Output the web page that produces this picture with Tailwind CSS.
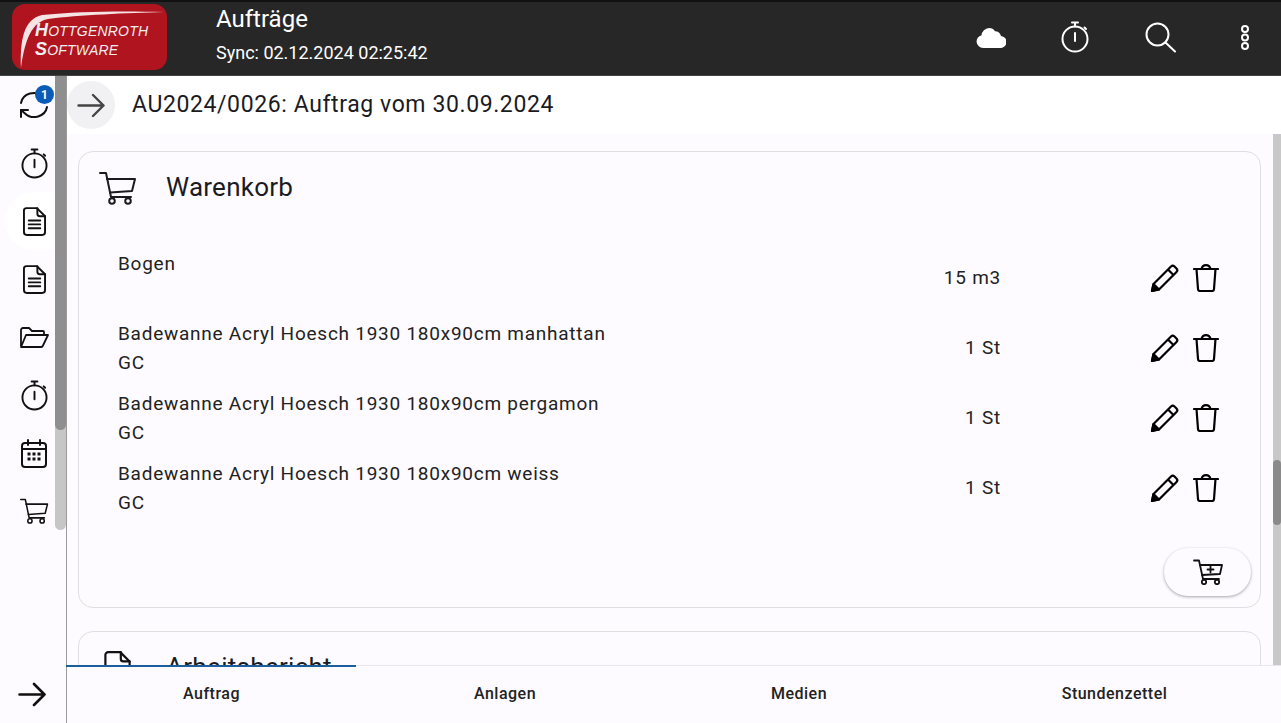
<!DOCTYPE html>
<html lang="de">
<head>
  <meta charset="UTF-8" />
  <meta name="viewport" content="width=device-width, initial-scale=1.0" />
  <title>Aufträge</title>
  <script src="https://cdn.jsdelivr.net/npm/@tailwindcss/browser@4"></script>
</head>
<body class="bg-[#fdfbff] font-['Roboto',sans-serif] text-[#1b1b1f]">
  <svg class="hidden">
    <symbol id="cart" viewBox="0 0 38 34" fill="none" stroke="currentColor" stroke-width="2" stroke-linecap="round" stroke-linejoin="round">
      <path d="M1 2h6l5 24h20" />
      <path d="M8 8h28l-3 12-22 1.500" />
      <circle cx="13" cy="30" r="2.800" />
      <circle cx="29" cy="30" r="2.800" />
    </symbol>
    <symbol id="doc" viewBox="0 0 24 30" fill="none" stroke="currentColor" stroke-width="2" stroke-linecap="round" stroke-linejoin="round">
      <path d="M3.500 1h11L23 9.500V26a3 3 0 0 1-3 3H4a3 3 0 0 1-3-3V3.500A2.500 2.500 0 0 1 3.500 1z" />
      <path d="M15 1v6a2.500 2.500 0 0 0 2.500 2.500H23" />
      <path d="M6 14h12M6 18h12M6 22h12" />
    </symbol>
    <symbol id="timer" viewBox="0 0 28 32" fill="none" stroke="currentColor" stroke-width="2" stroke-linecap="round">
      <circle cx="14" cy="18" r="12.500" />
      <path d="M14 12v8M11 1.500h6M14 1.500v4M23.500 6.500l1.500 1.500" />
    </symbol>
    <symbol id="pencil" viewBox="0 0 30 30" fill="none" stroke="currentColor" stroke-width="2.200" stroke-linejoin="round">
      <path d="M2 28l1.500-7L21 3.500a2.500 2.500 0 0 1 3.500 0l2 2a2.500 2.500 0 0 1 0 3.500L9 26.500z" />
      <path d="M18 6.500l5.500 5.500" />
      <path d="M2 28l1.500-7 5.500 5.500z" fill="currentColor" />
    </symbol>
    <symbol id="trash" viewBox="0 0 26 28" fill="none" stroke="currentColor" stroke-width="2.200" stroke-linecap="round" stroke-linejoin="round">
      <path d="M1 5h24" />
      <path d="M3.500 5l1.500 20a2 2 0 0 0 2 2h12a2 2 0 0 0 2-2l1.500-20" />
      <path d="M8.500 5C9 2.500 10.500 1.200 13 1.200S17 2.500 17.500 5" />
    </symbol>
  </svg>

  <div class="flex h-[723px] w-[1281px] flex-col overflow-hidden">
    <!-- header -->
    <header class="flex h-[76px] shrink-0 items-center border-t-2 border-b border-t-[#111] border-b-[#444] bg-[#272727] pb-[3px] text-white">
      <div class="relative ml-3 flex h-[66px] w-[155px] flex-col justify-center rounded-[13px] bg-[#b0141e] pl-[23px] pt-[6px] font-['Liberation_Sans',sans-serif] text-[14px] leading-[18px] italic text-[#eee]">
        <svg class="absolute left-[6px] top-[5px]" width="148" height="60" viewBox="0 0 148 60"><path d="M3 59C2 30 6 10 24 6 60 2 110 2 146 3 110 4 60 6 30 10 14 13 7 30 3 59z" fill="#f6e3e3" /></svg>
        <div class="relative whitespace-nowrap tracking-[0.2px]"><span class="text-[18px] font-bold">H</span>OTTGENROTH</div>
        <div class="relative whitespace-nowrap tracking-[0.2px]"><span class="text-[18px] font-bold">S</span>OFTWARE</div>
      </div>
      <div class="ml-[49px] mb-[5px]">
        <div class="text-[24px] leading-[30px]">Aufträge</div>
        <div class="mt-[7px] text-[18px] leading-[24px]">Sync: 02.12.2024 02:25:42</div>
      </div>
      <div class="ml-auto flex items-center">
        <svg width="30" height="22" viewBox="0 0 30 22" fill="#fff" class="mr-[55px]"><path d="M7 22a6.500 6.500 0 0 1-1.500-12.800A8 8 0 0 1 13 2a7 7 0 0 1 6 3.200A6.500 6.500 0 0 1 25 10a6 6 0 0 1-1 12z" /></svg>
        <svg width="28" height="32" class="mr-[56px] text-white"><use href="#timer" /></svg>
        <svg width="31" height="31" viewBox="0 0 31 31" fill="none" stroke="#fff" stroke-width="2" stroke-linecap="round" class="mr-[64px]"><circle cx="12.500" cy="12.500" r="11" /><path d="M20.500 20.500L30 29.500" /></svg>
        <svg width="10" height="27" viewBox="0 0 10 27" fill="none" stroke="#fff" stroke-width="2" class="mr-[31px]"><circle cx="5" cy="5" r="3" /><circle cx="5" cy="13.500" r="3" /><circle cx="5" cy="22" r="3" /></svg>
      </div>
    </header>

    <div class="flex min-h-0 flex-1">
      <!-- sidebar -->
      <aside class="relative flex w-[67px] shrink-0 flex-col border-r border-r-[#9b9b9b] bg-[#fdfbff] pl-[2px] text-[#111]">
        <div class="absolute left-[5px] top-[116px] h-[58px] w-[50px] rounded-l-full bg-white"></div>
        <div class="absolute left-[55px] top-0 h-[454px] w-[11px] rounded-b-[6px] bg-[#c6c6c6]"></div>
        <div class="absolute left-[55px] top-0 h-[354px] w-[11px] rounded-b-[6px] bg-[#8f8f8f]"></div>
        <div class="relative flex h-[58px] items-center justify-center">
          <svg width="30" height="30" viewBox="0 0 30 30" fill="none" stroke="currentColor" stroke-width="2" stroke-linecap="round" stroke-linejoin="round"><path d="M2 13A13 12 0 0 1 24 6.500L28 10" /><path d="M28 17A13 12 0 0 1 6 23.500L2 20" /><path d="M2 27v-7h7" /></svg>
          <div class="absolute left-[33px] top-[9px] flex h-[19px] w-[19px] items-center justify-center rounded-full bg-[#0b5cb8] text-[12px] font-bold text-white">1</div>
        </div>
        <div class="relative flex h-[58px] items-center justify-center"><svg width="27" height="31"><use href="#timer" /></svg></div>
        <div class="relative flex h-[58px] items-center justify-center"><svg width="23" height="29"><use href="#doc" /></svg></div>
        <div class="relative flex h-[58px] items-center justify-center"><svg width="23" height="29"><use href="#doc" /></svg></div>
        <div class="relative flex h-[58px] items-center justify-center">
          <svg width="30" height="21" viewBox="0 0 30 21" fill="none" stroke="currentColor" stroke-width="1.800" stroke-linejoin="round"><path d="M2 19V3a2 2 0 0 1 2-2h6l3 3h11a1 1 0 0 1 1 1v2" /><path d="M2 20L7 8h22l-5 10.500a2 2 0 0 1-2 1.500z" /></svg>
        </div>
        <div class="relative flex h-[58px] items-center justify-center"><svg width="27" height="31"><use href="#timer" /></svg></div>
        <div class="relative flex h-[58px] items-center justify-center">
          <svg width="26" height="29" viewBox="0 0 26 29" fill="none" stroke="currentColor" stroke-width="2" stroke-linecap="round"><rect x="1" y="4" width="24" height="24" rx="3" /><path d="M1 10h24M7 1v5M19 1v5" /><path d="M6.500 15h3M11.500 15h3M16.500 15h3M6.500 20h3M11.500 20h3M16.500 20h3" stroke-width="3" stroke-linecap="butt" /></svg>
        </div>
        <div class="relative flex h-[58px] items-center justify-center"><svg width="29" height="26"><use href="#cart" /></svg></div>
        <div class="mt-auto flex h-[58px] items-center justify-center">
          <svg width="28" height="25" viewBox="0 0 28 25" fill="none" stroke="currentColor" stroke-width="2.600" stroke-linecap="round" stroke-linejoin="round" class="ml-[-5px]"><path d="M1.500 12.500h25M16 2l10.500 10.500L16 23" /></svg>
        </div>
      </aside>

      <!-- main -->
      <main class="relative flex min-w-0 flex-1 flex-col">
        <div class="flex h-[58px] shrink-0 items-center bg-white">
          <div class="flex h-[48px] w-[48px] items-center justify-center rounded-full bg-[#f1f0f2] text-[#444]">
            <svg width="28" height="25" viewBox="0 0 28 25" fill="none" stroke="currentColor" stroke-width="2.400" stroke-linecap="round" stroke-linejoin="round"><path d="M1.500 12.500h25M16 2l10.500 10.500L16 23" /></svg>
          </div>
          <div class="ml-[17px] text-[23px] tracking-[0.6px]">AU2024/0026: Auftrag vom 30.09.2024</div>
        </div>

        <div class="relative min-h-0 flex-1 overflow-hidden bg-[#fdfbff] pl-[11px] pr-[20px] pt-[17px]">
          <div class="absolute right-0 top-0 h-full w-[8px] bg-[#c8c8c8]"></div>
          <div class="absolute right-0 top-[326px] h-[65px] w-[8px] rounded-[4px] bg-[#8a8a8a]"></div>

          <section class="h-[457px] rounded-[15px] border border-[#dfdee3]">
            <div class="flex h-[70px] items-center pl-[20px] pt-[1px]">
              <svg width="38" height="34"><use href="#cart" /></svg>
              <div class="ml-[29px] text-[26px] tracking-[0.25px]">Warenkorb</div>
            </div>
            <div class="mt-[21px] text-[19px] tracking-[0.75px] text-[#222]">
              <div class="flex h-[70px] items-center pl-[39px]">
                <div class="w-[760px] leading-[29px]">Bogen<br />&nbsp;</div>
                <div class="w-[123px] text-right">15 m3</div>
                <svg width="30" height="30" class="ml-[149px] text-black"><use href="#pencil" /></svg>
                <svg width="26" height="28" class="ml-[13px] text-black"><use href="#trash" /></svg>
              </div>
              <div class="flex h-[70px] items-center pl-[39px]">
                <div class="w-[760px] leading-[29px]">Badewanne Acryl Hoesch 1930 180x90cm manhattan<br />GC</div>
                <div class="w-[123px] text-right">1 St</div>
                <svg width="30" height="30" class="ml-[149px] text-black"><use href="#pencil" /></svg>
                <svg width="26" height="28" class="ml-[13px] text-black"><use href="#trash" /></svg>
              </div>
              <div class="flex h-[70px] items-center pl-[39px]">
                <div class="w-[760px] leading-[29px]">Badewanne Acryl Hoesch 1930 180x90cm pergamon<br />GC</div>
                <div class="w-[123px] text-right">1 St</div>
                <svg width="30" height="30" class="ml-[149px] text-black"><use href="#pencil" /></svg>
                <svg width="26" height="28" class="ml-[13px] text-black"><use href="#trash" /></svg>
              </div>
              <div class="flex h-[70px] items-center pl-[39px]">
                <div class="w-[760px] leading-[29px]">Badewanne Acryl Hoesch 1930 180x90cm weiss<br />GC</div>
                <div class="w-[123px] text-right">1 St</div>
                <svg width="30" height="30" class="ml-[149px] text-black"><use href="#pencil" /></svg>
                <svg width="26" height="28" class="ml-[13px] text-black"><use href="#trash" /></svg>
              </div>
            </div>
            <div class="mt-[25px] flex justify-end pr-[9px]">
              <div class="flex h-[48px] w-[87px] items-center justify-center rounded-full bg-[#fdfbff] shadow-[0_1px_3px_rgba(0,0,0,0.35)]">
                <svg width="30" height="26" viewBox="0 0 30 26" fill="none" stroke="#111" stroke-width="1.800" stroke-linecap="round" stroke-linejoin="round"><path d="M1 1.500h5l4 18.500h16" /><path d="M7 6h22l-2 9-18 1" /><circle cx="11" cy="23" r="2.200" /><circle cx="24" cy="23" r="2.200" /><path d="M14.500 10.500h6M17.500 7.500v6" /></svg>
              </div>
            </div>
          </section>

          <section class="mt-[23px] h-[120px] rounded-[15px] border border-[#dfdee3]">
            <div class="flex h-[70px] items-center pl-[25px] pt-[1px]">
              <svg width="27" height="33" class="text-[#111]"><use href="#doc" /></svg>
              <div class="ml-[35px] text-[26px] tracking-[0.25px]">Arbeitsbericht</div>
            </div>
          </section>
        </div>

        <!-- tabs -->
        <nav class="relative grid h-[58px] shrink-0 grid-cols-[289px_298px_290px_337px] items-center border-t border-[#e8e7ea] bg-[#fdfbff] pb-[2px] text-center text-[16px] font-medium tracking-[0.5px] text-[#222]">
          <div class="absolute left-[-1px] top-[-1px] h-[2px] w-[290px] bg-[#1b5e9e]"></div>
          <div>Auftrag</div>
          <div>Anlagen</div>
          <div>Medien</div>
          <div class="pl-[4px]">Stundenzettel</div>
        </nav>
      </main>
    </div>
  </div>
</body>
</html>
